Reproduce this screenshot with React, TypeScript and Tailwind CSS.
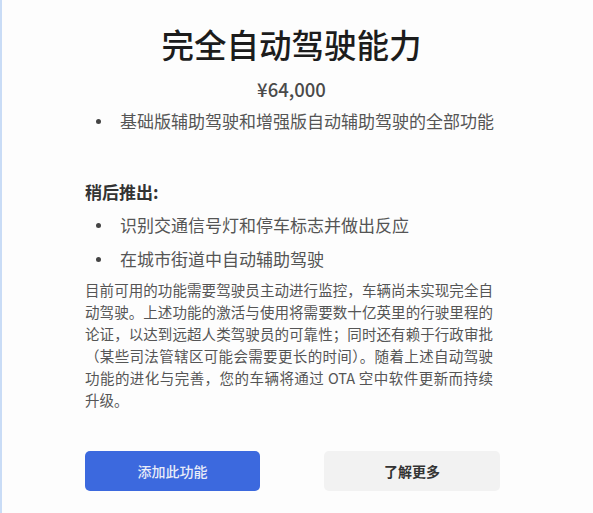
import React from 'react';

const font = "font-['Noto_Sans_CJK_SC','Noto_Sans',sans-serif]";

const Bullet = ({ text }: { text: string }) => (
  <li className="flex items-center h-[26px]">
    <span className="w-[5px] h-[5px] rounded-full bg-[#444] ml-[11px] mr-[19px]" />
    <span className="text-[17px] leading-[26px] text-[#555]">{text}</span>
  </li>
);

const App = () => {
  return (
    <div className={`w-[593px] h-[513px] flex ${font}`}>
      <div className="w-[2px] bg-[#c9dcf6]" />
      <div className="flex-1 bg-[#fdfdfd] flex flex-col">
        {/* header */}
        <div className="flex flex-col items-center pt-[24px] pr-[12px]">
          <h1 className="text-[32.5px] leading-[40px] font-medium text-[#1c1c1c]">完全自动驾驶能力</h1>
          <p className="mt-[12px] text-[18.5px] leading-[26px] font-medium text-[#4a4a4a]">¥64,000</p>
        </div>

        <div className="pl-[83px]">
          <ul className="mt-[6px]">
            <Bullet text="基础版辅助驾驶和增强版自动辅助驾驶的全部功能" />
          </ul>

          <h2 className="mt-[45px] text-[17px] leading-[26px] font-bold text-[#333]">稍后推出:</h2>
          <ul className="mt-[7px] flex flex-col gap-[8px]">
            <Bullet text="识别交通信号灯和停车标志并做出反应" />
            <Bullet text="在城市街道中自动辅助驾驶" />
          </ul>

          <p className="mt-[7px] w-[408px] text-[14.5px] leading-[22px] text-[#555] text-justify">
            目前可用的功能需要驾驶员主动进行监控，车辆尚未实现完全自动驾驶。上述功能的激活与使用将需要数十亿英里的行驶里程的论证，以达到远超人类驾驶员的可靠性；同时还有赖于行政审批（某些司法管辖区可能会需要更长的时间）。随着上述自动驾驶功能的进化与完善，您的车辆将通过 OTA 空中软件更新而持续升级。
          </p>

          <div className="mt-[40px] flex gap-[64px]">
            <button className="w-[175px] h-[40px] rounded-[5px] bg-[#3c69de] text-[#e8ecf8] text-[14px] font-medium">
              添加此功能
            </button>
            <button className="w-[176px] h-[40px] rounded-[5px] bg-[#f2f2f2] text-[#333] text-[14px] font-bold">
              了解更多
            </button>
          </div>
        </div>
      </div>
    </div>
  );
};

export default App;
